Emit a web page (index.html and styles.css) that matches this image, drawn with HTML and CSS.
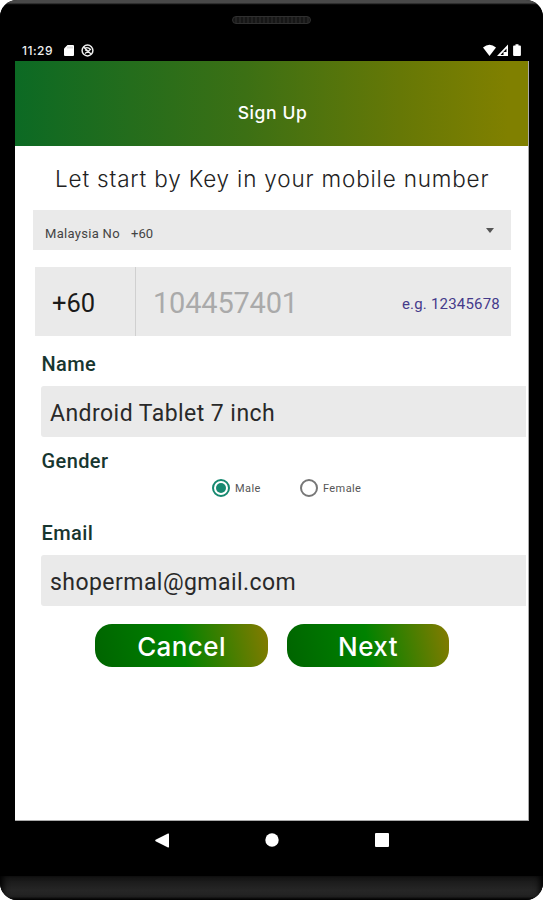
FILE: index.html
```html
<!DOCTYPE html>
<html lang="en">
<head>
<meta charset="utf-8">
<title>Sign Up</title>
<link rel="stylesheet" href="styles.css">
</head>
<body>
<div class="device">
  <div class="top-bezel"><div class="speaker"></div></div>
  <div class="status-bar">
    <span class="clock">11:29</span>
    <svg class="sd" width="10" height="12" viewBox="0 0 10 12"><path fill="#fff" d="M3.500 0H9a1 1 0 0 1 1 1v9a1 1 0 0 1-1 1H1a1 1 0 0 1-1-1V3.500z"/><path stroke="#aaa" stroke-width=".8" d="M4 1.500v2M6 1.500v2M8 1.500v2"/></svg>
    <svg width="13" height="13" viewBox="0 0 13 13" fill="none" stroke="#eee"><circle cx="6.500" cy="6.500" r="5.400" stroke-width="1.500"/><path stroke-width="1.300" d="M3.500 4.200Q7 2.500 9.500 5.500L4 9.500M4 6l3 1M2.500 3l7.500 7"/></svg>
    <svg class="signals" width="40" height="13" viewBox="0 0 40 13"><path fill="#fff" d="M0 3.500Q6.500-2 13 3.500L6.500 12z"/><path fill="#fff" fill-rule="evenodd" d="M25 .5V12H14zM23.500 4.500 17.500 11h3V8h3z"/><path stroke="#fff" d="M22 8v3"/><path fill="#fff" d="M32.500 1.500V.3h3v1.200H37a.9.900 0 0 1 .9.900V11a1 1 0 0 1-1 1h-5.800a1 1 0 0 1-1-1V2.400a.9.900 0 0 1 .9-.9z"/></svg>
  </div>
  <main class="screen">
    <header class="header"><h1>Sign Up</h1></header>
    <p class="intro"><span>Let start by Key in your mobile number</span></p>
    <div class="country"><span class="country-name">Malaysia No</span><span class="country-code">+60</span><i class="caret"></i></div>
    <div class="phone"><span class="prefix">+60</span><span class="number">104457401</span><span class="hint">e.g. 12345678</span></div>
    <div class="label name-label">Name</div>
    <div class="field name"><span>Android Tablet 7 inch</span></div>
    <div class="label gender-label">Gender</div>
    <div class="radios">
      <div class="radio on"><i class="dot"></i><span class="male">Male</span></div>
      <div class="radio"><i class="dot"></i><span class="female">Female</span></div>
    </div>
    <div class="label email-label">Email</div>
    <div class="field email"><span>shopermal@gmail.com</span></div>
    <div class="actions"><div class="button cancel"><span>Cancel</span></div><div class="button next"><span>Next</span></div></div>
  </main>
  <nav class="nav">
    <svg width="14" height="15" viewBox="0 0 14 15"><path fill="#fff" d="M13 .5q1-.3 1 .7v12.600q0 1-1 .6L.6 8.200q-.8-.7 0-1.400z"/></svg>
    <svg class="home" width="14" height="14" viewBox="0 0 14 14"><circle cx="7" cy="7" r="6.700" fill="#fff"/></svg>
    <svg width="14" height="14" viewBox="0 0 14 14"><rect width="14" height="14" rx="1" fill="#fff"/></svg>
  </nav>
  <div class="chin"></div>
</div>
</body>
</html>
```
FILE: styles.css
```css
* { box-sizing: border-box; }
body { margin: 0; background: #fff; font-family: Roboto, "Liberation Sans", sans-serif; }
span { white-space: nowrap; }
svg { flex: none; }
.device { width: 543px; height: 900px; background: #000; border-radius: 17px; overflow: hidden; display: flex; flex-direction: column; }
.top-bezel { height: 40px; flex: none; display: flex; justify-content: center; padding-top: 13px; background: linear-gradient(#484848 0 3px, #151515 4px, #000 5px); }
.speaker { width: 79px; height: 8px; margin-top: 3px; border: 1px solid #303030; border-radius: 4px; background: repeating-linear-gradient(90deg, #161616 0 2px, #222 2px 4px); }
.status-bar { height: 21px; flex: none; display: flex; align-items: center; padding-left: 22px; padding-right: 20px; color: #eee; }
.clock { width: 42px; font: 500 12px/20px Inter, sans-serif; letter-spacing: .5px; }
.sd { margin-right: 7px; }
.signals { margin-left: auto; }
.screen { width: 514px; height: 760px; flex: none; margin-left: 15px; background: #fff; border-bottom: 1px solid #aaa; border-right: 1px solid #aaa; display: flex; flex-direction: column; }
.header { height: 85px; width: 513px; flex: none; background: linear-gradient(90deg, #0c6a24, #3c7014 45%, #667806 75%, #808000 96%); display: flex; justify-content: center; padding-top: 41px; }
h1 { margin: 0; color: #fff; font: 500 17.500px/22px Inter, sans-serif; letter-spacing: .6px; padding-left: 2px; }
.intro { margin: 0 0 0 40px; height: 64px; font: 300 22.500px/66px Inter, sans-serif; letter-spacing: .82px; color: #222; }
.country { width: 478px; height: 40px; margin-left: 18px; background: #eaeaea; display: flex; align-items: center; padding: 6px 17px 0 12px; font-size: 13px; color: #444; flex: none; }
.country-name { width: 86px; letter-spacing: .3px; }
.caret { margin: -6px 0 0 auto; border: 4px solid transparent; border-top: 5px solid #555; border-bottom: 0; }
.phone { width: 476px; height: 69px; margin: 17px 0 0 20px; background: #eaeaea; display: flex; align-items: center; flex: none; }
.prefix { width: 101px; height: 69px; border-right: 1px solid #d0d0d0; padding-left: 17px; font-size: 25.500px; line-height: 73px; color: #1a1a1a; }
.number { margin: 4px 0 0 17px; font-size: 29px; line-height: 73px; letter-spacing: -.2px; color: #aaa; }
.hint { margin: 6px 0 0 auto; padding-right: 11px; font-size: 15px; line-height: 73px; letter-spacing: .2px; color: #453b8b; }
.label { height: 50px; flex: none; margin-left: 26px; padding-left: .5px; font-size: 20px; font-weight: 500; line-height: 57px; letter-spacing: .4px; color: #17362f; }
.field { width: 485px; height: 51px; flex: none; margin-left: 26px; background: #eaeaea; border-radius: 3px 0 0 3px; padding-left: 9px; font-size: 23px; line-height: 55px; letter-spacing: .45px; color: #292929; }
.gender-label { height: 36px; line-height: 48px; }
.radios { height: 32px; flex: none; margin-left: 197px; display: flex; align-items: center; padding-bottom: 3px; }
.radio { width: 88px; display: flex; align-items: center; gap: 5px; font-size: 11px; letter-spacing: .4px; color: #555; }
.radio span { padding-top: 1px; }
.dot { width: 18px; height: 18px; border: 2px solid #777; border-radius: 50%; flex: none; display: grid; place-items: center; }
.on .dot { border-color: #168970; }
.on .dot::after { content: ""; width: 10px; height: 10px; border-radius: 50%; background: #168970; }
.email-label { line-height: 57px; }
.actions { display: flex; gap: 19px; margin: 18px 0 0 80px; }
.button { height: 43px; border-radius: 17px; background: linear-gradient(78deg, #006400, #008200 50%, #7d7b00 97%); color: #fff; text-align: center; font: 500 26px/46px Inter, sans-serif; letter-spacing: .4px; }
.cancel { width: 173px; }
.next { width: 162px; }
.nav { height: 55px; flex: none; display: flex; justify-content: center; gap: 96px; padding-top: 12px; }
.chin { height: 24px; flex: none; background: linear-gradient(#151515, #262626 60%, #222 85%, #000); box-shadow: inset 6px 0 6px -3px #000, inset -6px 0 6px -3px #000; }
```
